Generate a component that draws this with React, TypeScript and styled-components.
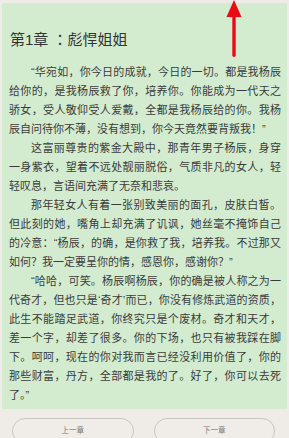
import React from "react";
import styled, { createGlobalStyle } from "styled-components";

const Global = createGlobalStyle`
  html, body { margin: 0; padding: 0; background: #f4f2ee; }
  #root { width: 289px; height: 438px; overflow: hidden; }
`;

const Page = styled.div`
  position: relative;
  width: 289px;
  height: 438px;
  background: #efece8;
  padding-top: 3px;
  box-sizing: border-box;
  font-family: "Liberation Sans", "Noto Sans CJK SC", sans-serif;
  overflow: hidden;
`;

const Panel = styled.main`
  margin: 0 2px;
  background: #d3ecd0;
  padding: 27px 6px 4px 7px;
  color: #3b3b3b;
`;

const Title = styled.h1`
  margin: 0 0 13px 1px;
  font-size: 15px;
  line-height: 20px;
  font-weight: 400;
  color: #333;
  font-family: "Liberation Sans", "Noto Sans CJK TC", sans-serif;
`;

const Line = styled.div<{ $indent?: boolean; $last?: boolean }>`
  font-size: 11px;
  line-height: 19px;
  height: 19px;
  white-space: nowrap;
  text-align: justify;
  text-align-last: ${(p) => (p.$last ? "left" : "justify")};
  padding-left: ${(p) => (p.$indent ? "22px" : "0")};
`;

const Footer = styled.nav`
  display: grid;
  grid-template-columns: 1fr 1fr;
  gap: 20px;
  padding: 9px 14px 0 12px;
`;

const NavButton = styled.button`
  height: 26px;
  border: 1px solid #c9c6c2;
  border-radius: 14px;
  background: #f0ede9;
  color: #7a7a7a;
  font-family: "Noto Sans CJK SC", sans-serif;
  font-size: 7.5px;
  padding: 0;
  padding-bottom: 4px;
`;

const Arrow = styled.svg`
  position: absolute;
  left: 224px;
  top: 0;
`;

type L = { t: string; indent?: boolean; last?: boolean };

const lines: L[] = [
  { t: "“华宛如，你今日的成就，今日的一切。都是我杨辰", indent: true },
  { t: "给你的，是我杨辰救了你，培养你。你能成为一代天之" },
  { t: "骄女，受人敬仰受人爱戴，全都是我杨辰给的你。我杨" },
  { t: "辰自问待你不薄，没有想到，你今天竟然要背叛我！”", last: true },
  { t: "这富丽尊贵的紫金大殿中，那青年男子杨辰，身穿", indent: true },
  { t: "一身紫衣，望着不远处靓丽脱俗，气质非凡的女人，轻" },
  { t: "轻叹息，言语间充满了无奈和悲哀。", last: true },
  { t: "那年轻女人有着一张别致美丽的面孔，皮肤白皙。", indent: true },
  { t: "但此刻的她，嘴角上却充满了讥讽，她丝毫不掩饰自己" },
  { t: "的冷意：“杨辰，的确，是你救了我，培养我。不过那又" },
  { t: "如何？我一定要呈你的情，感恩你，感谢你？”", last: true },
  { t: "“哈哈，可笑。杨辰啊杨辰，你的确是被人称之为一", indent: true },
  { t: "代奇才，但也只是‘奇才’而已，你没有修炼武道的资质，" },
  { t: "此生不能踏足武道，你终究只是个废材。奇才和天才，" },
  { t: "差一个字，却差了很多。你的下场，也只有被我踩在脚" },
  { t: "下。呵呵，现在的你对我而言已经没利用价值了，你的" },
  { t: "那些财富，丹方，全部都是我的了。好了，你可以去死" },
  { t: "了。”", last: true },
];

export default function App() {
  return (
    <Page>
      <Global />
      <Panel>
        <Title>第1章 ：彪悍姐姐</Title>
        {lines.map((l, i) => (
          <Line key={i} $indent={l.indent} $last={l.last}>
            {l.t}
          </Line>
        ))}
      </Panel>
      <Footer>
        <NavButton>上一章</NavButton>
        <NavButton>下一章</NavButton>
      </Footer>
      <Arrow width="20" height="60" viewBox="0 0 20 60">
        <polygon points="10,0 2.5,17 17.5,17" fill="#ee0a14" />
        <rect x="8.3" y="14" width="3.4" height="43" rx="1.7" fill="#ee0a14" />
      </Arrow>
    </Page>
  );
}
